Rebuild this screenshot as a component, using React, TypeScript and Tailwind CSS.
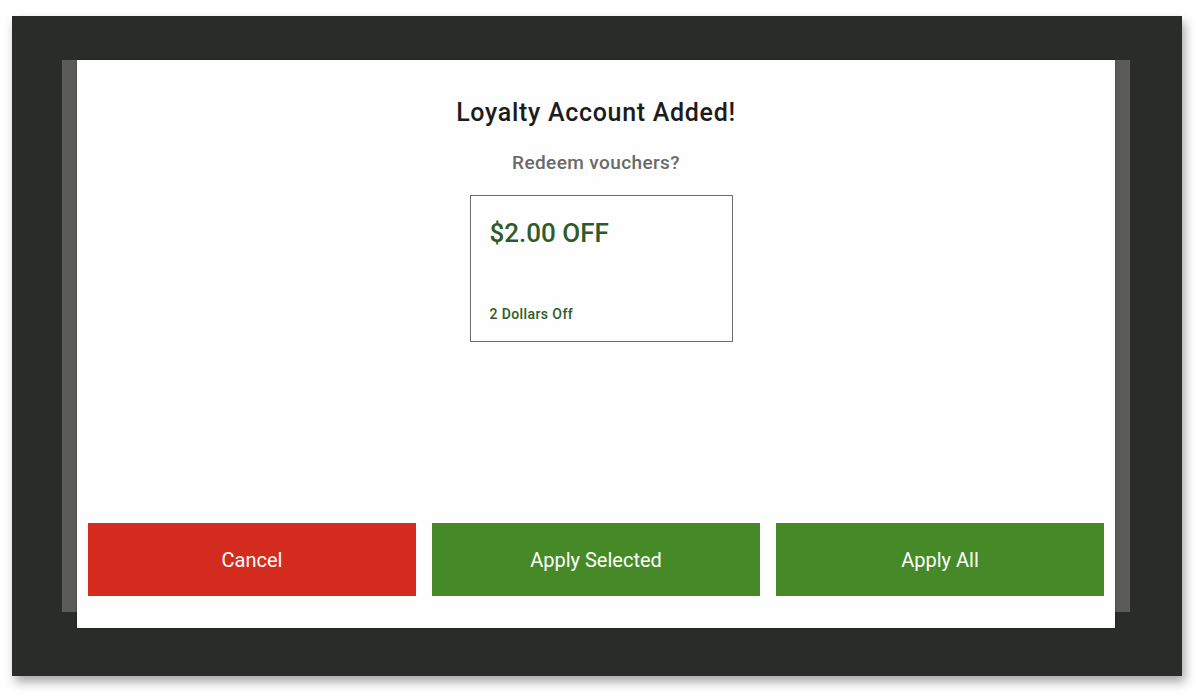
export default function App() {
  const buttons = [
    { label: 'Cancel', color: 'bg-[#d42b1f]' },
    { label: 'Apply Selected', color: 'bg-[#468a28]' },
    { label: 'Apply All', color: 'bg-[#468a28]' },
  ];

  return (
    <div className="w-[1196px] h-[698px] bg-white pl-[12px] pt-[16px] font-['Roboto',_'Liberation_Sans',_sans-serif]">
      <div className="w-[1170px] h-[660px] bg-[#2a2c2a] pl-[50px] pr-[52px] pt-[52px] pb-[56px] shadow-[3px_6px_10px_rgba(0,0,0,0.35)]">
        <div className="w-[1068px] h-[552px] bg-[#5b5c5a] px-[15px]">
          <div className="-my-[8px] h-[568px] bg-[#fdfefd] flex flex-col items-center shadow-[0_0_2px_rgba(0,0,0,0.4)]">
            <div className="pt-[37px] text-[25px] leading-[32px] tracking-[0.7px] font-medium text-[#1c1c1c]">
              Loyalty Account Added!
            </div>
            <div className="mt-[20px] text-[19px] leading-[28px] tracking-[0.4px] font-medium text-[#6a6a6a]">
              Redeem vouchers?
            </div>
            <div className="mt-[18px] ml-[10px] w-[263px] h-[147px] border border-[#6d6d6d] flex flex-col justify-between px-[19px] pt-[20px] pb-[18px] text-[#2e5b2a]">
              <div className="text-[26px] leading-[34px] font-medium">$2.00 OFF</div>
              <div className="text-[14px] leading-[18px] tracking-[0.4px] font-medium">2 Dollars Off</div>
            </div>
            <div className="flex-1" />
            <div className="w-full flex gap-4 px-[11px] pb-[32px]">
              {buttons.map((b) => (
                <button
                  key={b.label}
                  className={`flex-1 h-[73px] ${b.color} text-white text-[20px] flex items-center justify-center`}
                >
                  {b.label}
                </button>
              ))}
            </div>
          </div>
        </div>
      </div>
    </div>
  );
}
